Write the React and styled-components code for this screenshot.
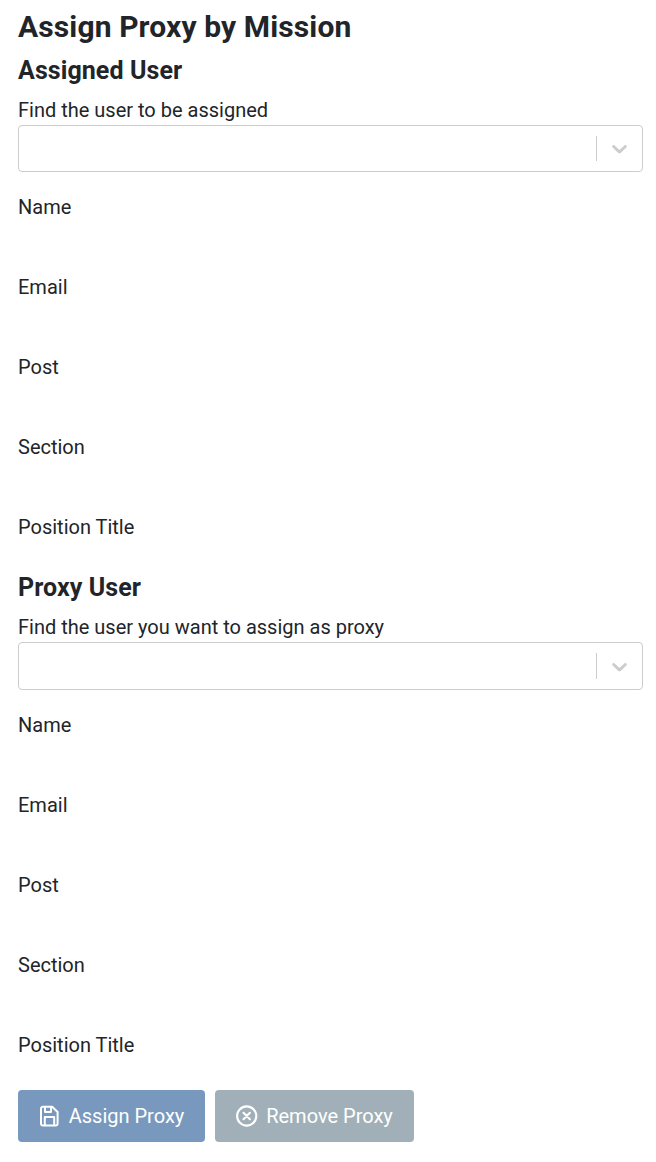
import React from "react";
import styled, { createGlobalStyle } from "styled-components";

const GlobalStyle = createGlobalStyle`
  * {
    box-sizing: border-box;
  }

  body {
    margin: 0;
    background: #fff;
    color: #212529;
    font-family: Roboto, sans-serif;
    font-size: 20px;
    line-height: 30px;
  }
`;

const Page = styled.main`
  padding: 9px 13px 20px 18px;
`;

const Title = styled.h1`
  margin: 0 0 10px;
  font-size: 30px;
  font-weight: 700;
  line-height: 36px;
  letter-spacing: 0.12px;
`;

const Section = styled.section`
  margin-bottom: 30px;
`;

const SectionTitle = styled.h2`
  margin: 0 0 9px;
  font-size: 25px;
  font-weight: 700;
  line-height: 31px;
  letter-spacing: 0.08px;
`;

const Label = styled.label`
  display: block;
`;

const Select = styled.div`
  display: flex;
  align-items: center;
  height: ${(props) => props.$height}px;
  margin-bottom: 20px;
  border: 1px solid #ccc;
  border-radius: 4px;
`;

const SelectInput = styled.input`
  flex: 1;
  min-width: 0;
  padding: 2px 10px;
  border: 0;
  outline: 0;
  background: transparent;
  font: inherit;
`;

const Separator = styled.span`
  align-self: stretch;
  width: 1px;
  margin: 10px 0;
  background: #ccc;
`;

const Indicator = styled.span`
  display: flex;
  padding: 10px;
  color: #ccc;
`;

const Field = styled.div`
  height: 80px;

  &:last-child {
    height: 30px;
  }
`;

const Actions = styled.div`
  display: flex;
  gap: 10px;
`;

const Button = styled.button`
  display: flex;
  align-items: center;
  justify-content: center;
  gap: 8px;
  width: ${(props) => props.$width}px;
  height: 52px;
  padding: 0;
  border: 0;
  border-radius: 4px;
  background: ${(props) => props.$color};
  color: #fff;
  font: inherit;
`;

const fields = ["Name", "Email", "Post", "Section", "Position Title"];

const UserSection = ({ id, title, label, selectHeight }) => {
  return (
    <Section>
      <SectionTitle>{title}</SectionTitle>
      <Label htmlFor={id}>{label}</Label>
      <Select $height={selectHeight}>
        <SelectInput type="text" id={id} />
        <Separator />
        <Indicator>
          <svg width="25" height="25" viewBox="0 0 20 20" fill="currentColor">
            <path d="M4.516 7.548c0.436-0.446 1.043-0.481 1.576 0l3.908 3.747 3.908-3.747c0.533-0.481 1.141-0.446 1.574 0 0.436 0.445 0.408 1.197 0 1.615-0.406 0.418-4.695 4.502-4.695 4.502-0.217 0.223-0.502 0.335-0.787 0.335s-0.57-0.112-0.789-0.335c0 0-4.287-4.084-4.695-4.502s-0.436-1.17 0-1.615z" />
          </svg>
        </Indicator>
      </Select>
      {fields.map((field) => (
        <Field key={field}>{field}</Field>
      ))}
    </Section>
  );
};

const SaveIcon = () => (
  <svg
    width="22"
    height="22"
    viewBox="0 0 22 22"
    fill="none"
    stroke="currentColor"
    strokeWidth="2"
    strokeLinejoin="round"
  >
    <path d="M3.8 1.8h9.4L18.6 7v11.8a1.8 1.8 0 0 1-1.8 1.8h-13A1.8 1.8 0 0 1 2 18.8V3.6a1.8 1.8 0 0 1 1.8-1.8Z" />
    <path d="M6 2v5h6V2M5.8 20.2v-8.1h9.4v8.1" />
  </svg>
);

const RemoveIcon = () => (
  <svg
    width="22"
    height="22"
    viewBox="0 0 22 22"
    fill="none"
    stroke="currentColor"
    strokeWidth="2.1"
    strokeLinecap="round"
  >
    <circle cx="10.7" cy="11" r="9.6" />
    <path d="m7.5 7.8 6.4 6.4m0-6.4-6.4 6.4" />
  </svg>
);

const App = () => {
  return (
    <>
      <GlobalStyle />
      <Page>
        <Title>Assign Proxy by Mission</Title>
        <UserSection
          id="assigned-user"
          title="Assigned User"
          label="Find the user to be assigned"
          selectHeight={47}
        />
        <UserSection
          id="proxy-user"
          title="Proxy User"
          label="Find the user you want to assign as proxy"
          selectHeight={48}
        />
        <Actions>
          <Button type="button" $color="#7998be" $width={187}>
            <SaveIcon />
            Assign Proxy
          </Button>
          <Button type="button" $color="#a1b0b8" $width={199}>
            <RemoveIcon />
            Remove Proxy
          </Button>
        </Actions>
      </Page>
    </>
  );
};

export default App;
